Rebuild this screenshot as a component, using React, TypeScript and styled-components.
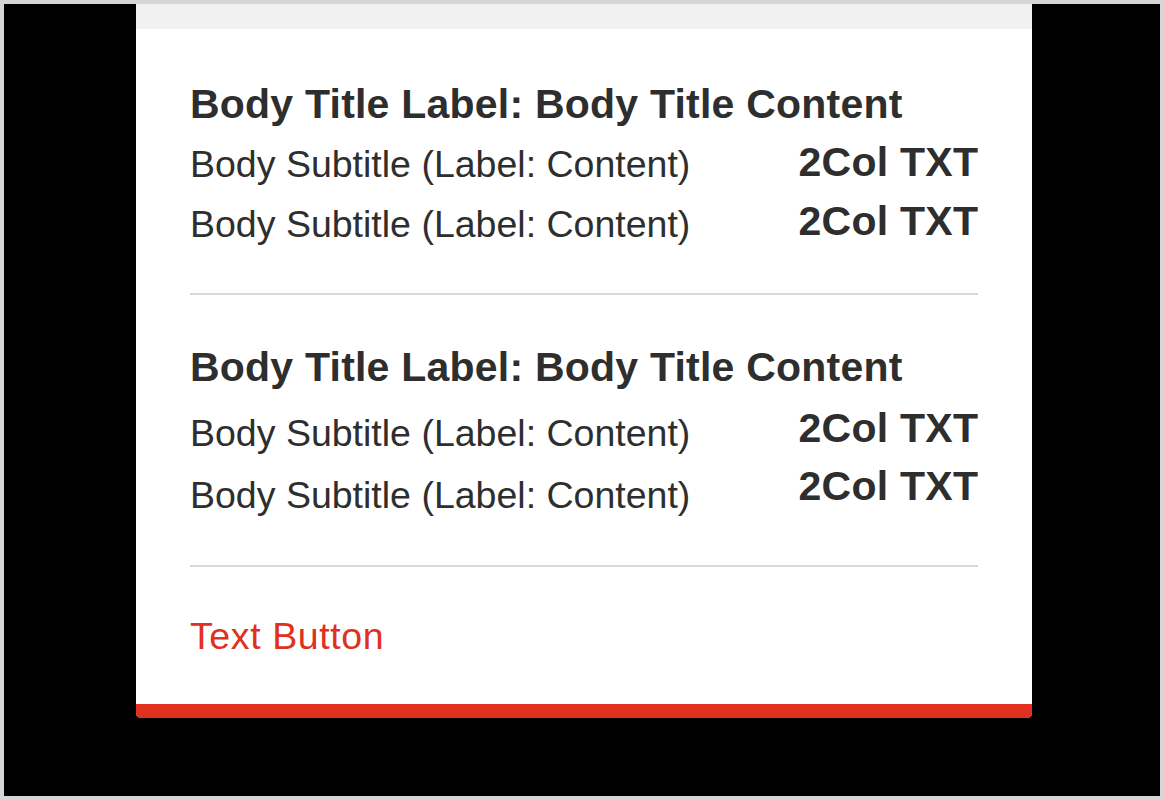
import styled, { createGlobalStyle } from 'styled-components'

const GlobalStyle = createGlobalStyle`
  html, body {
    margin: 0;
    padding: 0;
    background: #000;
  }
  body {
    font-family: "Liberation Sans", Arial, Helvetica, sans-serif;
  }
`;

const Frame = styled.div`
  box-sizing: border-box;
  width: 1164px;
  height: 800px;
  border: 4px solid #d6d6d6;
  background: #000;
  display: flex;
  align-items: flex-start;
  padding-left: 132px;
`;

const Card = styled.div`
  width: 896px;
  display: flex;
  flex-direction: column;
  background: #fff;
  border-radius: 0 0 5px 5px;
  overflow: hidden;
`;

const TopBand = styled.div`
  height: 25px;
  background: #f1f1f1;
`;

const Body = styled.div`
  display: flex;
  flex-direction: column;
  padding: 51px 54px 46px;
`;

const Section = styled.section<{ $top?: number }>`
  padding-top: ${p => p.$top ?? 0}px;
  padding-bottom: 39px;
  border-bottom: 2px solid #d9d9d9;
`;

const Title = styled.h2`
  margin: 0;
  font-size: 41px;
  line-height: 48px;
  font-weight: 700;
  color: #2e2e2e;
  letter-spacing: 0.22px;
`;

const Columns = styled.div`
  display: flex;
  justify-content: space-between;
  align-items: flex-start;
`;

const Column = styled.ul<{ $offset: number; $right?: boolean }>`
  list-style: none;
  margin: ${p => p.$offset}px 0 0;
  padding: 0;
  display: flex;
  flex-direction: column;
  align-items: ${p => (p.$right ? 'flex-end' : 'flex-start')};
`;

const Subtitle = styled.li<{ $lh: number }>`
  font-size: 37.5px;
  line-height: ${p => p.$lh}px;
  font-weight: 400;
  color: #2e2e2e;
  white-space: nowrap;
`;

const Value = styled.li<{ $lh: number }>`
  font-size: 41px;
  line-height: ${p => p.$lh}px;
  font-weight: 700;
  color: #2e2e2e;
  white-space: nowrap;
  letter-spacing: 0.25px;
  margin-right: -0.25px;
`;

const TextButton = styled.button`
  align-self: flex-start;
  margin-top: 47px;
  padding: 0;
  border: none;
  background: none;
  font-family: inherit;
  font-size: 37.5px;
  line-height: 44px;
  letter-spacing: 0.6px;
  color: #e0301e;
  cursor: pointer;
`;

const RedBar = styled.div`
  height: 14px;
  background: #e0301e;
`;

type SectionData = {
  top: number;
  leftOffset: number;
  leftLh: number;
  rightOffset: number;
  rightLh: number;
};

const sections: SectionData[] = [
  { top: 0, leftOffset: 6, leftLh: 60, rightOffset: 5, rightLh: 59 },
  { top: 48, leftOffset: 11, leftLh: 62, rightOffset: 8, rightLh: 58 },
];

const subtitles = ['Body Subtitle (Label: Content)', 'Body Subtitle (Label: Content)'];
const values = ['2Col TXT', '2Col TXT'];

export default function App() {
  return (
    <>
      <GlobalStyle />
      <Frame>
        <Card>
          <TopBand />
          <Body>
            {sections.map((s, i) => (
              <Section key={i} $top={s.top}>
                <Title>Body Title Label: Body Title Content</Title>
                <Columns>
                  <Column $offset={s.leftOffset}>
                    {subtitles.map((t, j) => (
                      <Subtitle key={j} $lh={s.leftLh}>{t}</Subtitle>
                    ))}
                  </Column>
                  <Column $offset={s.rightOffset} $right>
                    {values.map((t, j) => (
                      <Value key={j} $lh={s.rightLh}>{t}</Value>
                    ))}
                  </Column>
                </Columns>
              </Section>
            ))}
            <TextButton type="button">Text Button</TextButton>
          </Body>
          <RedBar />
        </Card>
      </Frame>
    </>
  )
}
